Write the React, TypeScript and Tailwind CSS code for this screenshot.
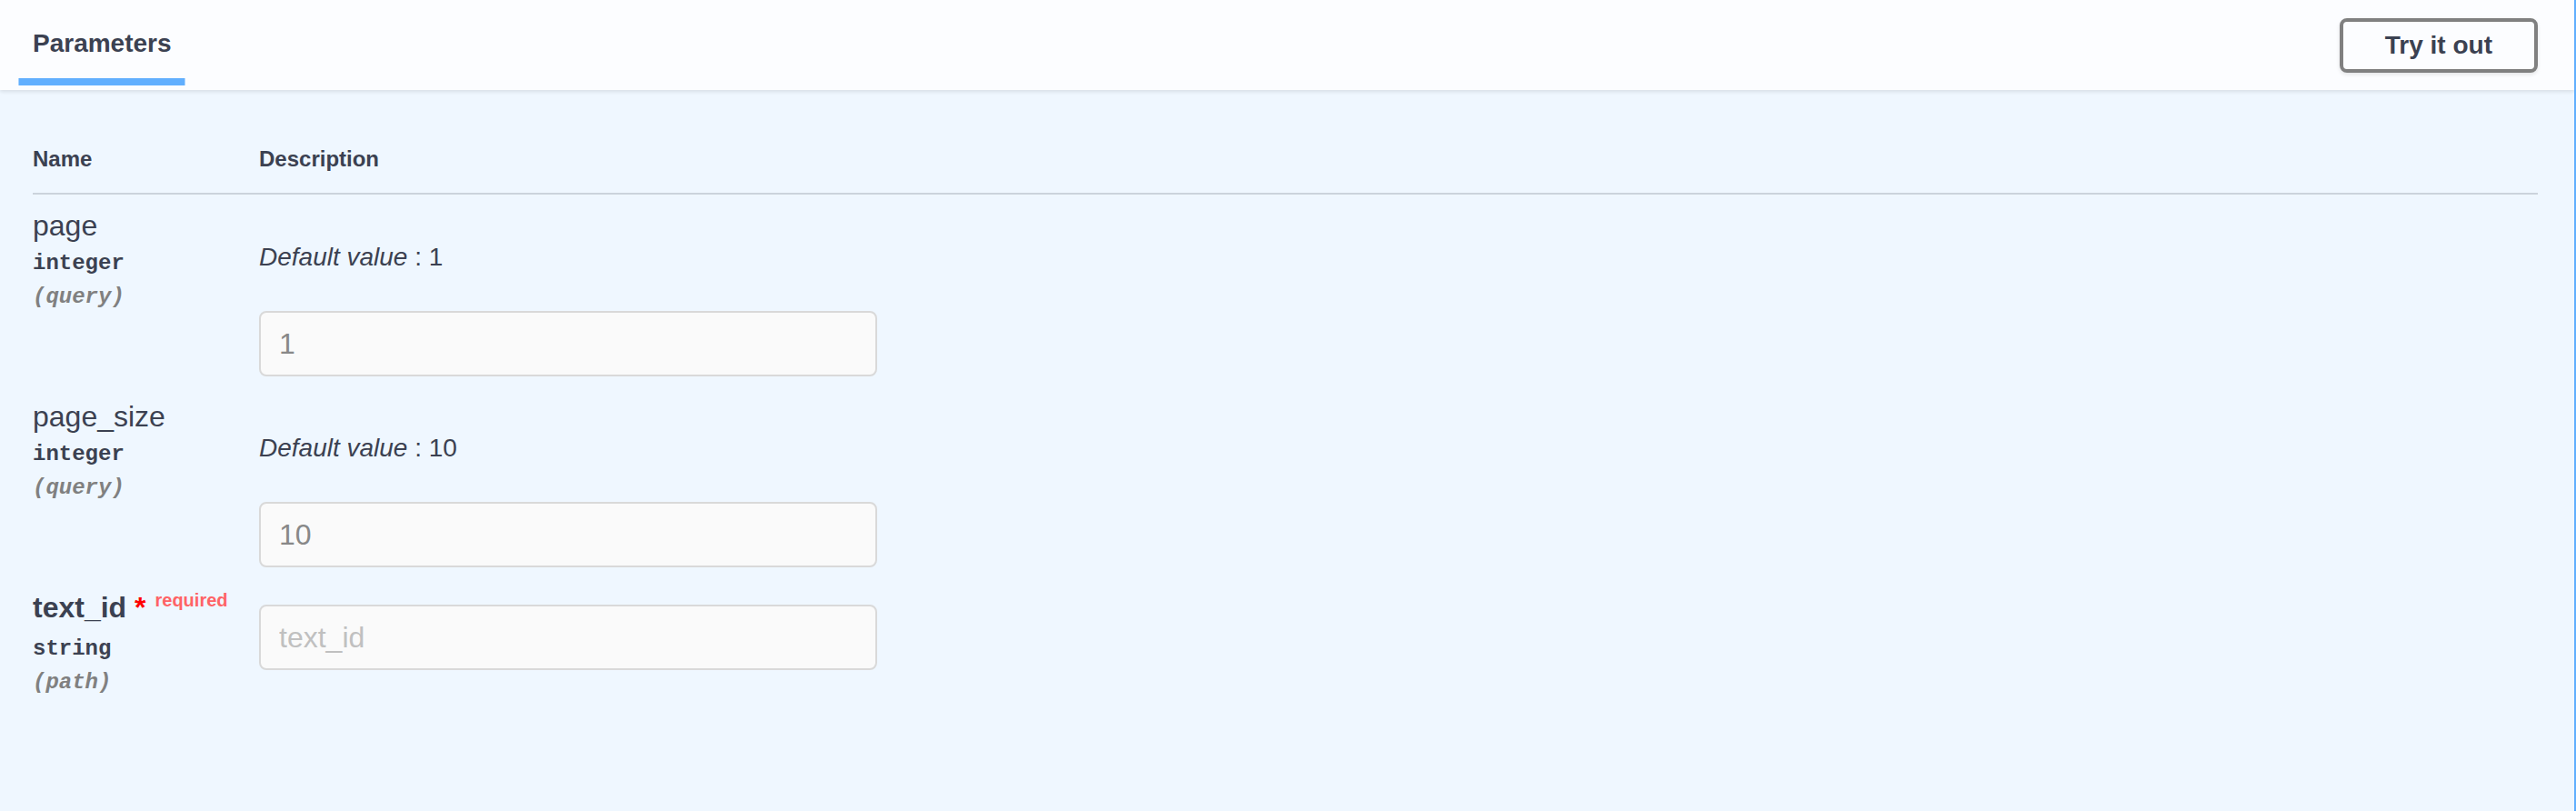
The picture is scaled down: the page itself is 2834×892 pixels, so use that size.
import React from "react";

const sans = "font-['Liberation_Sans',Arial,Helvetica,sans-serif]";
const mono = "font-['Liberation_Mono','Courier_New',monospace]";

type Param = {
  name: string;
  type: string;
  loc: string;
  def?: string;
  required?: boolean;
};

const params: Param[] = [
  { name: "page", type: "integer", loc: "(query)", def: "1" },
  { name: "page_size", type: "integer", loc: "(query)", def: "10" },
  { name: "text_id", type: "string", loc: "(path)", required: true },
];

function Row({ p }: { p: Param }) {
  return (
    <div className={p.def ? "flex h-[210px]" : "flex"}>
      <div className="w-[249px] shrink-0">
        <div className="text-[32px] leading-[36px] whitespace-nowrap">
          {p.required ? (
            <>
              <span className="font-bold">{p.name}</span>
              <span className="font-bold text-[#ff0000]">{"\u00a0*"}</span>
              <span className="relative top-[-12px] pl-[10px] text-[20px] font-bold text-[#ff6366]">
                required
              </span>
            </>
          ) : (
            p.name
          )}
        </div>
        <div className={`${mono} text-[24px] leading-[27px] font-bold py-[10px]`}>{p.type}</div>
        <div className={`${mono} text-[24px] leading-[27px] font-bold italic text-[#808080]`}>{p.loc}</div>
      </div>
      <div className="flex flex-col">
        {p.def ? (
          <>
            <div className="mt-[37px] text-[28px] leading-[32px]">
              <i>Default value</i> : {p.def}
            </div>
            <input
              readOnly
              value={p.def}
              className={`${sans} mt-[43px] h-[72px] w-[680px] border-2 border-[#d9d9d9] rounded-[8px] bg-[#fafafa] px-[20px] text-[32px] text-[#888888] outline-none`}
            />
          </>
        ) : (
          <input
            readOnly
            placeholder={p.name}
            className={`${sans} mt-[15px] h-[72px] w-[680px] border-2 border-[#d9d9d9] rounded-[8px] bg-[#fafafa] px-[20px] text-[32px] text-[#888888] placeholder:text-[#c0c0c0] outline-none`}
          />
        )}
      </div>
    </div>
  );
}

export default function App() {
  return (
    <div
      className={`${sans} w-[2834px] h-[892px] bg-[#eff7ff] border-r-2 border-[#61affe] text-[#3b4151] overflow-hidden`}
    >
      <header className="relative z-10 h-[99px] bg-[#fcfdff] shadow-[0_2px_4px_rgba(0,0,0,0.1)] flex justify-between pl-[36px] pr-[40px]">
        <div className="pt-[32px]">
          <h4 className="relative inline-block text-[28px] leading-[32px] font-bold">
            Parameters
            <span className="absolute left-1/2 -translate-x-1/2 w-[120%] top-[54px] h-[8px] bg-[#61affe]" />
          </h4>
        </div>
        <div className="pt-[20px]">
          <button className="h-[60px] px-[46px] border-4 border-[#808080] rounded-[8px] bg-transparent text-[28px] leading-[32px] font-bold text-[#3b4151] shadow-[0_2px_4px_rgba(0,0,0,0.1)]">
            Try it out
          </button>
        </div>
      </header>
      <div className="pl-[36px] pr-[40px]">
        <div className="mt-[62px] flex pb-[23px] border-b-2 border-[#cbd3dc] text-[24px] leading-[28px] font-bold">
          <div className="w-[249px] shrink-0">Name</div>
          <div>Description</div>
        </div>
        <div className="pt-[16px]">
          {params.map((p) => (
            <Row key={p.name} p={p} />
          ))}
        </div>
      </div>
    </div>
  );
}
